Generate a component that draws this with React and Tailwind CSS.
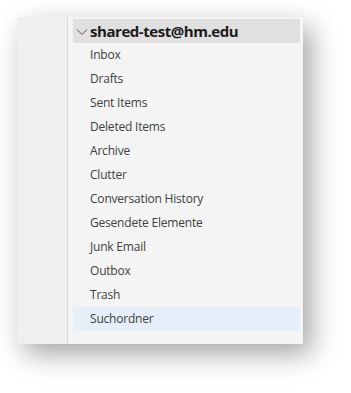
export default function App() {
  const items = [
    "Inbox",
    "Drafts",
    "Sent Items",
    "Deleted Items",
    "Archive",
    "Clutter",
    "Conversation History",
    "Gesendete Elemente",
    "Junk Email",
    "Outbox",
    "Trash",
  ];
  return (
    <div className="w-[351px] h-[393px] bg-white pt-[17px] pl-[17px]" style={{ fontFamily: '"Open Sans", "Noto Sans", sans-serif' }}>
      <div className="flex w-[286px] h-[327px] bg-[#f4f4f4] shadow-[8px_10px_26px_rgba(0,0,0,0.36)]">
        <div className="w-[51px] bg-[#efefef] border-r border-[#d6d6d6]" />
        <div className="flex-1 pt-[2px] pl-[5px] pr-[3px]">
          <div className="h-[24px] bg-[#e0e0e0] flex items-center pl-[3px]">
            <svg width="12" height="12" viewBox="0 0 12 12" className="mr-[2px] mt-[1px]">
              <path d="M1 3.5 L6 8.5 L11 3.5" fill="none" stroke="#555" strokeWidth="1" />
            </svg>
            <span className="text-[15px] font-bold text-[#1a1a1a] tracking-[-0.45px]">shared-test@hm.edu</span>
          </div>
          {items.map((t) => (
            <div key={t} className="h-[24px] flex items-center pl-[17px] text-[12px] text-[#404040] tracking-[-0.2px]">
              {t}
            </div>
          ))}
          <div className="h-[24px] flex items-center pl-[17px] text-[12px] text-[#404040] bg-[#e6eff9] tracking-[-0.2px]">
            Suchordner
          </div>
        </div>
      </div>
    </div>
  );
}
